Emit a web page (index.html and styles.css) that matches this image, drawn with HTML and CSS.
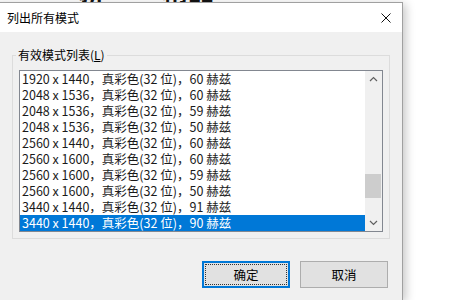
FILE: index.html
```html
<!DOCTYPE html>
<html lang="zh-CN">
<head>
<meta charset="utf-8">
<title>列出所有模式</title>
<link rel="stylesheet" href="styles.css">
</head>
<body>
<div class="backdrop"><div class="backdrop-text"><span>新</span><span class="far">精品</span></div></div>
<div class="dialog">
  <div class="titlebar">
    <span class="title">列出所有模式</span>
    <svg class="close" width="10" height="10" viewBox="0 0 10 10"><path d="M0.5 0.5 L9.5 9.5 M9.5 0.5 L0.5 9.5" stroke="#111" stroke-width="1" fill="none"/></svg>
  </div>
  <div class="body">
    <fieldset class="group">
      <legend class="group-label">有效模式列表(<u>L</u>)</legend>
      <div class="listbox">
        <ul class="rows">
          <li>1920 x 1440，真彩色(32 位)，60 赫兹</li>
          <li>2048 x 1536，真彩色(32 位)，60 赫兹</li>
          <li>2048 x 1536，真彩色(32 位)，59 赫兹</li>
          <li>2048 x 1536，真彩色(32 位)，50 赫兹</li>
          <li>2560 x 1440，真彩色(32 位)，60 赫兹</li>
          <li>2560 x 1600，真彩色(32 位)，60 赫兹</li>
          <li>2560 x 1600，真彩色(32 位)，59 赫兹</li>
          <li>2560 x 1600，真彩色(32 位)，50 赫兹</li>
          <li>3440 x 1440，真彩色(32 位)，91 赫兹</li>
          <li class="selected">3440 x 1440，真彩色(32 位)，90 赫兹</li>
        </ul>
        <div class="scrollbar">
          <svg class="arrow" width="17" height="17" viewBox="0 0 17 17"><path d="M5 10 L8.5 6.5 L12 10" stroke="#606060" stroke-width="1.2" fill="none"/></svg>
          <div class="track"><div class="thumb"></div></div>
          <svg class="arrow" width="17" height="17" viewBox="0 0 17 17"><path d="M5 7 L8.5 10.5 L12 7" stroke="#606060" stroke-width="1.2" fill="none"/></svg>
        </div>
      </div>
    </fieldset>
    <div class="buttons">
      <button class="btn default"><span class="focus">确定</span></button>
      <button class="btn">取消</button>
    </div>
  </div>
</div>
</body>
</html>
```
FILE: styles.css
```css
html, body {
  margin: 0;
  padding: 0;
  background: #ffffff;
  width: 450px;
  height: 300px;
  overflow: hidden;
  font-family: "Noto Sans CJK SC", sans-serif;
}

.backdrop {
  height: 2px;
  overflow: hidden;
}

.backdrop-text {
  font-family: "Noto Sans CJK SC", sans-serif;
  font-weight: bold;
  font-size: 26px;
  line-height: 26px;
  margin-top: -23px;
  padding-left: 78px;
  white-space: nowrap;
  color: #111;
}

.backdrop-text .far {
  margin-left: 58px;
}

.dialog {
  margin-left: -10px;
  width: 411px;
  height: 297px;
  border: 1px solid #a0a0a0;
  border-bottom: none;
  background: #f0f0f0;
  box-shadow: 3px 2px 9px rgba(0, 0, 0, 0.22);
  display: flex;
  flex-direction: column;
}

.titlebar {
  height: 29px;
  background: #ffffff;
  display: flex;
  align-items: center;
  justify-content: space-between;
  padding-left: 16px;
  padding-right: 11px;
}

.title {
  font-size: 12px;
  color: #000;
  line-height: 14px;
}

.close {
  display: block;
}

.body {
  display: flex;
  flex-direction: column;
  padding: 16px 12px 0 21px;
}

.group {
  margin: 0;
  border: 1px solid #dcdcdc;
  padding: 8px 6px 6px 6px;
  min-width: 0;
}

.group-label {
  font-size: 12px;
  line-height: 14px;
  color: #000;
  padding: 0 2px;
  margin-left: -3px;
}

.listbox {
  height: 160px;
  border: 1px solid #828790;
  background: #ffffff;
  display: flex;
}

.rows {
  list-style: none;
  margin: 0;
  padding: 0;
  flex: 1;
  min-width: 0;
}

.rows li {
  height: 16px;
  line-height: 16px;
  font-size: 12.5px;
  color: #1a1a1a;
  padding-left: 2px;
  white-space: nowrap;
}

.rows li.selected {
  background: #0078d7;
  color: #ffffff;
}

.scrollbar {
  width: 17px;
  background: #f0f0f0;
  display: flex;
  flex-direction: column;
}

.arrow {
  display: block;
  flex: none;
}

.track {
  flex: 1;
  display: flex;
  flex-direction: column;
  padding-top: 86px;
}

.thumb {
  height: 24px;
  margin: 0 1px 0 0;
  background: #cdcdcd;
}

.buttons {
  display: flex;
  justify-content: flex-end;
  gap: 10px;
  margin-top: 22px;
  padding-right: 2px;
}

.btn {
  width: 88px;
  height: 27px;
  margin: 0;
  padding: 0;
  background: #e1e1e1;
  border: 1px solid #adadad;
  font-family: "Noto Sans CJK SC", sans-serif;
  font-size: 12.5px;
  color: #000;
  display: flex;
  align-items: center;
  justify-content: center;
}

.btn.default {
  border: 2px solid #0078d7;
  padding: 1px;
}

.btn .focus {
  flex: 1;
  align-self: stretch;
  display: flex;
  align-items: center;
  justify-content: center;
  outline: 1px dotted #333;
  outline-offset: -1px;
}
```
